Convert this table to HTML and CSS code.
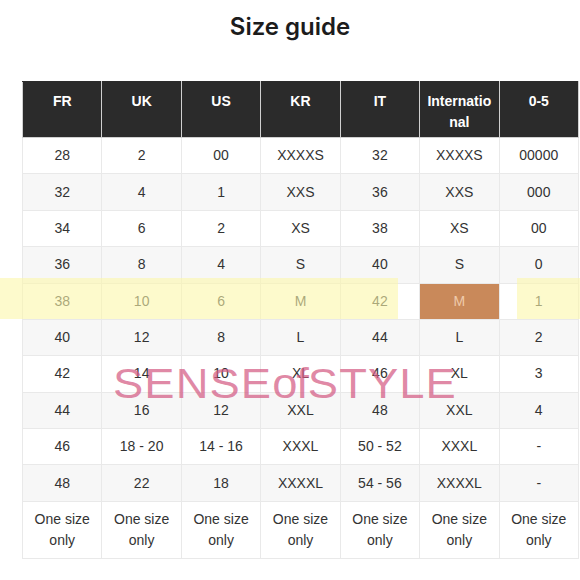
FILE: index.html
```html
<!DOCTYPE html>
<html lang="en">
<head>
<meta charset="utf-8">
<title>Size guide</title>
<link rel="stylesheet" href="styles.css">
</head>
<body>
<div class="sheet">
  <h1 class="title">Size guide</h1>
  <table class="guide">
    <thead>
      <tr><th>FR</th><th>UK</th><th>US</th><th>KR</th><th>IT</th><th>International</th><th>0-5</th></tr>
    </thead>
    <tbody>
      <tr><td>28</td><td>2</td><td>00</td><td>XXXXS</td><td>32</td><td>XXXXS</td><td>00000</td></tr>
      <tr><td>32</td><td>4</td><td>1</td><td>XXS</td><td>36</td><td>XXS</td><td>000</td></tr>
      <tr><td>34</td><td>6</td><td>2</td><td>XS</td><td>38</td><td>XS</td><td>00</td></tr>
      <tr><td>36</td><td>8</td><td>4</td><td>S</td><td>40</td><td>S</td><td>0</td></tr>
      <tr><td>38</td><td>10</td><td>6</td><td>M</td><td>42</td><td class="marked">M</td><td>1</td></tr>
      <tr><td>40</td><td>12</td><td>8</td><td>L</td><td>44</td><td>L</td><td>2</td></tr>
      <tr><td>42</td><td>14</td><td>10</td><td>XL</td><td>46</td><td>XL</td><td>3</td></tr>
      <tr><td>44</td><td>16</td><td>12</td><td>XXL</td><td>48</td><td>XXL</td><td>4</td></tr>
      <tr><td>46</td><td>18 - 20</td><td>14 - 16</td><td>XXXL</td><td>50 - 52</td><td>XXXL</td><td>-</td></tr>
      <tr><td>48</td><td>22</td><td>18</td><td>XXXXL</td><td>54 - 56</td><td>XXXXL</td><td>-</td></tr>
      <tr><td>One size only</td><td>One size only</td><td>One size only</td><td>One size only</td><td>One size only</td><td>One size only</td><td>One size only</td></tr>
    </tbody>
  </table>
  <div class="highlight highlight-left"></div>
  <div class="highlight highlight-right"></div>
  <div class="watermark">SENSE<span class="wm-of">of</span>STYLE</div>
</div>
</body>
</html>
```
FILE: styles.css
```css
html, body {
  margin: 0;
  padding: 0;
  background: #ffffff;
}

.sheet {
  position: relative;
  width: 580px;
  height: 580px;
  overflow: hidden;
  font-family: "Liberation Sans", Arial, sans-serif;
}

.title {
  margin: 12px 0 39px;
  font-family: Inter, "Liberation Sans", sans-serif;
  font-size: 24px;
  font-weight: 600;
  line-height: 30px;
  text-align: center;
  color: #1c1c1c;
}

.guide {
  margin-left: 22px;
  width: 557px;
  table-layout: fixed;
  border-collapse: collapse;
  font-size: 14px;
  line-height: 21px;
  color: #333333;
  text-align: center;
}

.guide th {
  height: 56px;
  box-sizing: border-box;
  padding: 9px 6px 0;
  vertical-align: top;
  background: #2b2b2b;
  color: #ffffff;
  font-weight: bold;
  border: 1px solid #d0d0d0;
  border-top-color: #2b2b2b;
  word-break: break-all;
}

.guide td {
  padding: 7.2px 6px;
  border: 1px solid #e9e9e9;
  vertical-align: middle;
}

.guide tbody tr:nth-child(even) td {
  background: #f7f7f7;
}

.guide td.marked {
  background: #c9895a;
  color: #efcbab;
}

.highlight {
  position: absolute;
  top: 278px;
  height: 41px;
  background: rgba(252, 246, 170, 0.6);
  pointer-events: none;
}

.highlight-left {
  left: 0;
  width: 398px;
}

.highlight-right {
  left: 517px;
  width: 63px;
}

.watermark {
  position: absolute;
  left: 113px;
  top: 360px;
  font-family: "Liberation Sans", Arial, sans-serif;
  font-size: 42px;
  line-height: 48px;
  letter-spacing: 1px;
  color: rgba(212, 92, 132, 0.72);
  white-space: nowrap;
  transform: scaleX(1.08);
  transform-origin: left center;
  pointer-events: none;
}

.wm-of {
  letter-spacing: -1px;
}
```
